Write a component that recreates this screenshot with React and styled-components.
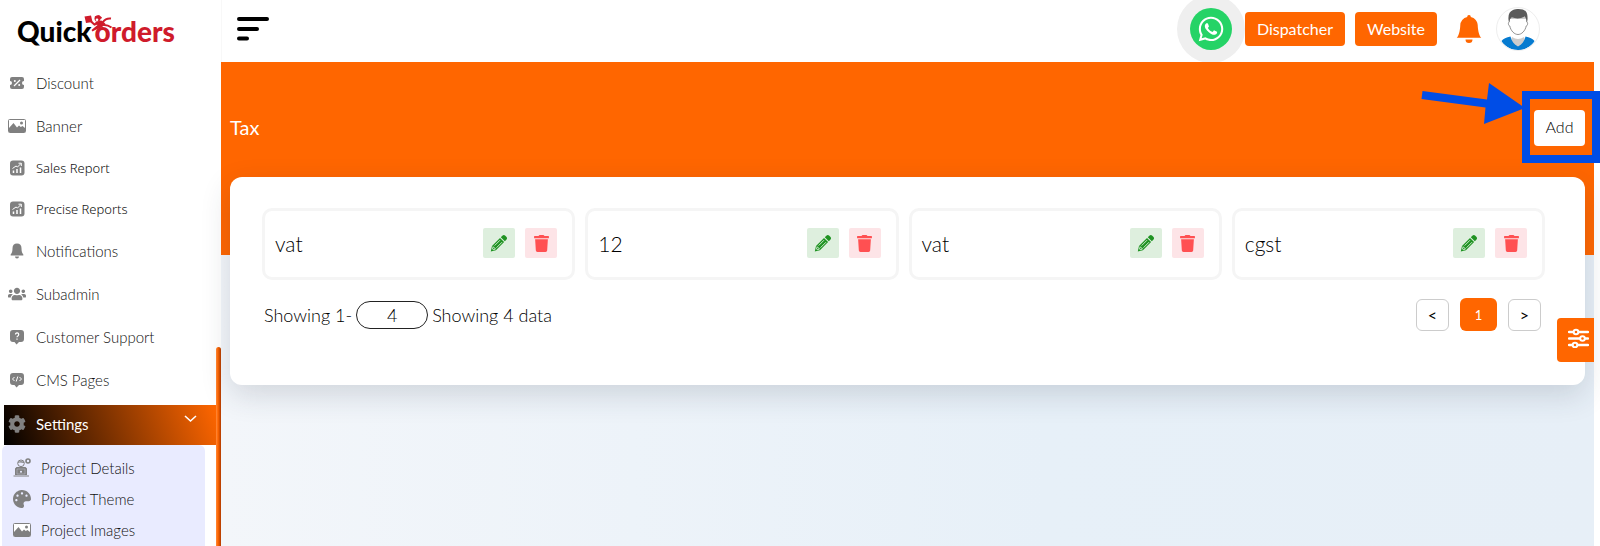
import React, { useState } from 'react'
import styled, { createGlobalStyle } from 'styled-components'
import { BsBellFill } from 'react-icons/bs'
import { FaWhatsapp, FaTrash, FaUsers, FaCog, FaPalette } from 'react-icons/fa'

const GlobalStyle = createGlobalStyle`
  * {
    box-sizing: border-box;
  }
  body {
    margin: 0;
    background: #fff;
    color: #000;
    font-family: Lato, 'Liberation Sans', sans-serif;
    font-weight: 300;
    font-size: 15px;
  }
  button,
  input {
    font: inherit;
    color: inherit;
    margin: 0;
    padding: 0;
    border: 0;
    cursor: pointer;
  }
  a {
    color: inherit;
    text-decoration: none;
  }
  svg {
    display: block;
  }
`

const Layout = styled.div`
  display: flex;
  height: 100vh;
  padding-right: 6px;
  overflow: hidden;
`

/* sidebar */
const Sidebar = styled.aside`
  display: flex;
  flex: 0 0 221px;
`
const SidebarBody = styled.div`
  flex: 1;
  overflow: hidden;
`
const Scroll = styled.div`
  display: flex;
  align-items: flex-end;
  width: 5px;
`
const Thumb = styled.div`
  width: 5px;
  height: 199px;
  border-radius: 3px 3px 0 0;
  background: linear-gradient(90deg, #ff8a3c, #ff6600 40%, #b03a00);
`
const Logo = styled.a`
  position: relative;
  display: flex;
  align-items: center;
  gap: 3px;
  height: 61px;
  padding-left: 17px;
  font-size: 28px;
  line-height: 32px;
  font-weight: 900;
  color: #000;
`
const LogoRed = styled.span`
  color: #cf1b2b;
`
const Runner = styled.svg`
  position: absolute;
  left: 84px;
  top: 15px;
`
const NavLink = styled.a`
  display: flex;
  align-items: center;
  gap: 10px;
  height: ${({ $compact }) => ($compact ? 41 : 43)}px;
  padding-left: 8px;
  color: #111;
  font-family: ${({ $compact }) =>
    $compact ? "'Noto Sans', sans-serif" : 'inherit'};
  font-size: ${({ $compact }) => ($compact ? 13 : 15)}px;
`
const IconBox = styled.span`
  display: flex;
  align-items: center;
  justify-content: center;
  width: 18px;
  color: #808080;
`
const SettingsButton = styled.button`
  display: flex;
  align-items: center;
  gap: 10px;
  width: calc(100% - 4px);
  height: 40px;
  margin: 4px 0 0 4px;
  padding: 0 19px 2px 4px;
  background: linear-gradient(70deg, #000 0%, #ff6600 100%);
  color: #fff;
  font-weight: 400;
`
const Chevron = styled.svg`
  margin: 0 0 10px auto;
`
const SubMenu = styled.div`
  margin: 0 11px 0 2px;
  padding: 7px 0 10px;
  border-radius: 6px;
  background: #e9ebff;
`
const SubLink = styled(NavLink)`
  height: 31px;
  padding-left: 11px;
`

/* top bar */
const Main = styled.main`
  display: flex;
  flex-direction: column;
  flex: 1;
  min-width: 0;
`
const Header = styled.header`
  display: flex;
  align-items: center;
  height: 62px;
  padding: 0 54px 4px 16px;
  box-shadow: inset 1px 0 #f8f8f8;
`
const MenuButton = styled.button`
  background: none;
`
const HeaderActions = styled.div`
  display: flex;
  align-items: center;
  gap: 10px;
  margin-left: auto;
`
const WhatsappLink = styled.a`
  display: flex;
  align-items: center;
  justify-content: center;
  width: 42px;
  height: 42px;
  margin-right: 3px;
  border-radius: 50%;
  background: #25d366;
  box-shadow: 0 0 0 13px #efefef;
  color: #fff;
`
const HeaderButton = styled.button`
  position: relative;
  height: 34px;
  padding: 0 12px 2px;
  border-radius: 4px;
  background: #ff6600;
  color: #fff;
  font-size: 16px;
  font-weight: 400;
`
const BellButton = styled.button`
  margin: 0 3px 0 8px;
  background: none;
  color: #ff6600;
`
const AvatarButton = styled.button`
  width: 44px;
  height: 44px;
  border: 1px solid #eee;
  border-radius: 50%;
  background: #fff;
  overflow: hidden;
`

/* page */
const Content = styled.section`
  position: relative;
  flex: 1;
  padding: 0 9px;
  background:
    linear-gradient(#ff6600, #ff6600) 0 0 / 100% 193px no-repeat,
    linear-gradient(90deg, #f3f6fa, #e7f0f8 60%, #e7eff7);
`
const TitleBar = styled.div`
  display: flex;
  align-items: center;
  justify-content: space-between;
  padding: 48px 0 31px;
`
const Title = styled.h1`
  margin: 0;
  padding-bottom: 2px;
  color: #fff;
  font-size: 20px;
  font-weight: 400;
`
const AddWrap = styled.div`
  position: relative;
`
const AddButton = styled.button`
  display: block;
  width: 51px;
  height: 36px;
  padding-bottom: 4px;
  border-radius: 4px;
  background: #fff;
  font-size: 16px;
`
const Frame = styled.div`
  position: absolute;
  z-index: 1;
  inset: -19px -15px -17px -12px;
  border: 8px solid #004de6;
  pointer-events: none;
`
const Arrow = styled.svg`
  position: absolute;
  z-index: 1;
  right: 60px;
  top: -27px;
`
const Card = styled.div`
  padding: 31px 40px 54px 32px;
  border-radius: 12px;
  background: #fff;
  box-shadow: 0 10px 30px rgba(40, 50, 70, 0.16);
`
const Grid = styled.div`
  display: grid;
  grid-template-columns: repeat(4, 1fr);
  gap: 10px;
`
const Item = styled.div`
  display: flex;
  align-items: center;
  gap: 10px;
  height: 72px;
  padding: 0 15px 2px 10px;
  border: 3px solid #f5f5f5;
  border-radius: 10px;
`
const ItemName = styled.span`
  flex: 1;
  font-size: 21px;
`
const ItemButton = styled.button`
  display: flex;
  align-items: center;
  justify-content: center;
  width: 32px;
  height: 30px;
  border-radius: 2px;
  background: ${({ $danger }) => ($danger ? '#fde4e7' : '#deefde')};
  color: ${({ $danger }) => ($danger ? '#ff5052' : '#1f9322')};
`
const Footer = styled.div`
  display: flex;
  align-items: center;
  justify-content: space-between;
  margin-top: 18px;
  padding: 0 4px 0 2px;
`
const Showing = styled.label`
  display: flex;
  align-items: center;
  gap: 4px;
  font-size: 18px;
`
const CountInput = styled.input`
  width: 72px;
  height: 28px;
  border: 1px solid #222;
  border-radius: 14px;
  background: #fff;
  text-align: center;
`
const Pages = styled.nav`
  display: flex;
  align-items: center;
  gap: 11px;
`
const PageButton = styled.button`
  width: ${({ $active }) => ($active ? 37 : 33)}px;
  height: ${({ $active }) => ($active ? 33 : 32)}px;
  border: ${({ $active }) => ($active ? 'none' : '1px solid #ccc')};
  border-radius: 6px;
  background: ${({ $active }) => ($active ? '#ff6600' : '#fff')};
  color: ${({ $active }) => ($active ? '#fff' : '#000')};
  font-size: ${({ $active }) => ($active ? 13 : 16)}px;
  font-weight: 400;
`
const FilterButton = styled.button`
  position: absolute;
  right: 0;
  top: 256px;
  display: flex;
  align-items: center;
  justify-content: center;
  width: 37px;
  height: 44px;
  padding: 0 5px 4px 11px;
  border-radius: 4px 0 0 4px;
  background: #ff6600;
`

const TicketIcon = () => (
  <svg width="16" height="14" viewBox="0 0 16 14">
    <path
      fill="currentColor"
      d="M3 1h10a2 2 0 0 1 2 2v2a2 2 0 0 0 0 4v2a2 2 0 0 1-2 2H3a2 2 0 0 1-2-2V9a2 2 0 0 0 0-4V3a2 2 0 0 1 2-2z"
    />
    <path d="M5 10l6-6" stroke="#fff" strokeWidth="1.2" />
    <circle cx="5.8" cy="4.9" r="1" fill="#fff" />
    <circle cx="10.2" cy="9.1" r="1" fill="#fff" />
  </svg>
)
const ImageIcon = () => (
  <svg width="18" height="14" viewBox="0 0 18 14">
    <rect x="0.5" y="0.5" width="17" height="13" rx="1" fill="#fff" stroke="currentColor" />
    <path fill="currentColor" d="M1 9l4.500-5 3.500 4.500 2-2 1.800 1.500 1.700-1L17 9v4H1z" />
    <circle cx="13.500" cy="4" r="1.500" fill="currentColor" />
  </svg>
)
const ChartIcon = () => (
  <svg width="16" height="16" viewBox="0 0 16 16">
    <rect x="1" y="0.500" width="14.500" height="15" rx="3" fill="currentColor" />
    <path
      d="M4.500 13v-2.500M8 13V9M11.500 13V7.500"
      stroke="#fff"
      strokeWidth="1.500"
      fill="none"
    />
    <path d="M3.500 8.500L7 6l1.500 1L12 3.500M9.500 3.200h2.800V6" stroke="#fff" fill="none" />
  </svg>
)
const ChatIcon = ({ children }) => (
  <svg width="16" height="16" viewBox="0 0 16 16">
    <path
      fill="currentColor"
      d="M4 1h8a3 3 0 0 1 3 3v6a3 3 0 0 1-3 3h-2l-2.500 2.500L5.500 13H4a3 3 0 0 1-3-3V4a3 3 0 0 1 3-3z"
    />
    {children}
  </svg>
)
const HelpIcon = () => (
  <ChatIcon>
    <path
      d="M6.500 5.500a1.600 1.600 0 1 1 2.400 1.400c-.7.400-.9.700-.9 1.300M8 9.500v1.200"
      stroke="#fff"
      strokeWidth="1.200"
      fill="none"
    />
  </ChatIcon>
)
const CodeIcon = () => (
  <ChatIcon>
    <path
      d="M5.500 5L3.500 7l2 2M10.500 5l2 2-2 2M8.800 4.500L7.200 9.500"
      stroke="#fff"
      fill="none"
    />
  </ChatIcon>
)
const BellIcon = () => (
  <svg width="14" height="16" viewBox="0 0 14 16">
    <path
      fill="currentColor"
      d="M7 .5c3 0 4.500 2 4.500 4.700 0 3.300.5 4.500 1.800 6.300.3.500 0 1-.6 1H1.300c-.6 0-.9-.5-.6-1C2 9.700 2.500 8.500 2.500 5.200 2.500 2.500 4 .5 7 .5zM5 13.500h4a2 2 0 0 1-4 0z"
    />
  </svg>
)
const OperatorIcon = () => (
  <svg width="18" height="19" viewBox="0 0 18 19">
    <path
      fill="currentColor"
      d="M3.500 9h9l1.500 1.500V17H2v-6.500zM.5 17.500h15.500v1H.5z"
    />
    <circle cx="8" cy="5.300" r="3.300" fill="none" stroke="currentColor" />
    <path d="M4.700 5C5 2.500 11 2.500 11.300 5c-2-.3-4-.8-6.600 0z" fill="currentColor" />
    <circle cx="15" cy="3" r="2" fill="none" stroke="currentColor" strokeWidth="1.600" />
    <path d="M4 11h8v5H4z" fill="none" stroke="#b5b6c4" strokeWidth="0.600" />
    <circle cx="8" cy="13.800" r="1" fill="#e9ebff" />
  </svg>
)
const PencilIcon = () => (
  <svg width="18" height="18" viewBox="0 0 18 18">
    <path
      fill="currentColor"
      d="M12.300 1.700c1-1 2-1 3 0l1 1c1 1 1 2 0 3l-1.500 1.500-4-4zM10 3.900l4.100 4.100-8.200 8.200L.8 17.500l1.200-5.400z"
    />
    <path
      d="M10 6.200l-5.400 5.400M12 8.200l-5.500 5.500M3.200 12.700l2.300 2.300-2.300.7-.7-.7z"
      stroke="#deefde"
      strokeWidth="0.900"
      fill="none"
    />
  </svg>
)
const SlidersIcon = () => (
  <svg width="21" height="20" viewBox="0 0 21 20">
    <g fill="#ff6600" stroke="#fff" strokeWidth="2" strokeLinecap="round">
      <path d="M1 4h19M1 10.500h19M1 17h19" strokeWidth="2.400" />
      <circle cx="8" cy="4" r="2.300" />
      <circle cx="14.500" cy="10.500" r="2.300" />
      <circle cx="7" cy="17" r="2.300" />
    </g>
  </svg>
)
const AvatarIcon = () => (
  <svg width="42" height="42" viewBox="0 0 42 42">
    <path d="M15 29q6 4 12 0l2 7-8 5-8-5z" fill="#ccc" />
    <path
      d="M13.500 28.500c-4 1-7.500 2-9 4.500 2 4 8 9 16.500 9s14.500-5 16.500-9c-1.500-2.500-5-3.500-9-4.500-1 4.500-3.500 8-7.500 10-4-2-6.500-5.500-7.500-10z"
      fill="#067bd0"
    />
    <path
      d="M12.300 10v4c-1.300 0-1.300 3.500.5 4 1 5 4.700 8.500 8.200 8.500s7.200-3.500 8.200-8.500c1.800-.5 1.800-4 .5-4v-4z"
      fill="#fff"
      stroke="#777"
      strokeWidth="0.800"
    />
    <path
      d="M12 14c-1.500-6 0-10.500 4-12C20 .3 27 .5 29.300 4c1.500 3 1.500 6 .7 10-.5-2-1-4-2.200-5.500-4.800 2.500-9 2.300-13 .8-1.500 1-2.300 3-2.800 4.700z"
      fill="#5b5b5b"
    />
  </svg>
)

const navItems = [
  { label: 'Discount', icon: <TicketIcon /> },
  { label: 'Banner', icon: <ImageIcon /> },
  { label: 'Sales Report', icon: <ChartIcon />, compact: true },
  { label: 'Precise Reports', icon: <ChartIcon />, compact: true },
  { label: 'Notifications', icon: <BellIcon /> },
  { label: 'Subadmin', icon: <FaUsers size={18} /> },
  { label: 'Customer Support', icon: <HelpIcon /> },
  { label: 'CMS Pages', icon: <CodeIcon /> },
]
const subItems = [
  { label: 'Project Details', icon: <OperatorIcon /> },
  { label: 'Project Theme', icon: <FaPalette size={18} /> },
  { label: 'Project Images', icon: <ImageIcon /> },
]
const taxes = ['vat', '12', 'vat', 'cgst']

const App = () => {
  const [open, setOpen] = useState(true)
  const [count, setCount] = useState('4')

  return (
    <Layout>
      <GlobalStyle />
      <Sidebar>
        <SidebarBody>
          <Logo href="#">
            <span>Quick</span>
            <LogoRed>orders</LogoRed>
            <Runner width="30" height="17" viewBox="0 0 30 17">
              <g fill="#cf1b2b">
                <path d="M.5 1.500L7 .5l1.500 6.500-6.500 1z" />
                <circle cx="13.500" cy="3.500" r="3" />
                <path d="M10.500 1.500l4.500-1.500 3 2.500-1 1.500z" />
                <path d="M11 7l6-1.500c2 .5 3.500 2 4.500 3.500l-4 3.500c-3 1-6 2-9 4l-1-1.500 6-5z" />
              </g>
              <path
                d="M7 6.500l3.500 3 4-1.500M19 7c2-3 4-4 8-3.500M19 10c3-.5 5 0 8.500 2.500"
                stroke="#cf1b2b"
                strokeWidth="2"
                fill="none"
              />
              <circle cx="13" cy="4.800" r="1.300" fill="#fff" />
            </Runner>
          </Logo>
          {navItems.map(({ label, icon, compact }) => (
            <NavLink key={label} href="#" $compact={compact}>
              <IconBox>{icon}</IconBox>
              {label}
            </NavLink>
          ))}
          <SettingsButton aria-expanded={open} onClick={() => setOpen(!open)}>
            <IconBox>
              <FaCog size={18} />
            </IconBox>
            Settings
            <Chevron width="13" height="8" viewBox="0 0 13 8">
              <path d="M1 1l5.500 5L12 1" stroke="#fff" strokeWidth="1.600" fill="none" />
            </Chevron>
          </SettingsButton>
          {open && (
            <SubMenu>
              {subItems.map(({ label, icon }) => (
                <SubLink key={label} href="#">
                  <IconBox>{icon}</IconBox>
                  {label}
                </SubLink>
              ))}
            </SubMenu>
          )}
        </SidebarBody>
        <Scroll>
          <Thumb />
        </Scroll>
      </Sidebar>
      <Main>
        <Header>
          <MenuButton aria-label="Toggle menu">
            <svg width="32" height="24" viewBox="0 0 32 24">
              <path
                d="M2 2h28M2 12h18M2 21.500h8"
                stroke="#000"
                strokeWidth="4"
                strokeLinecap="round"
              />
            </svg>
          </MenuButton>
          <HeaderActions>
            <WhatsappLink href="#" aria-label="WhatsApp">
              <FaWhatsapp size={28} />
            </WhatsappLink>
            <HeaderButton>Dispatcher</HeaderButton>
            <HeaderButton>Website</HeaderButton>
            <BellButton aria-label="Alerts">
              <BsBellFill size={28} />
            </BellButton>
            <AvatarButton aria-label="Profile">
              <AvatarIcon />
            </AvatarButton>
          </HeaderActions>
        </Header>
        <Content>
          <TitleBar>
            <Title>Tax</Title>
            <AddWrap>
              <AddButton>Add</AddButton>
              <Frame />
              <Arrow width="104" height="44" viewBox="0 0 104 44">
                <path
                  d="M1.500 8L66 16.500 68 0l36 25-41 16 1.500-16.500L.5 16z"
                  fill="#004de6"
                />
              </Arrow>
            </AddWrap>
          </TitleBar>
          <Card>
            <Grid>
              {taxes.map((name, i) => (
                <Item key={i}>
                  <ItemName>{name}</ItemName>
                  <ItemButton aria-label={`Edit ${name}`}>
                    <PencilIcon />
                  </ItemButton>
                  <ItemButton $danger aria-label={`Delete ${name}`}>
                    <FaTrash size={17} />
                  </ItemButton>
                </Item>
              ))}
            </Grid>
            <Footer>
              <Showing>
                Showing 1-
                <CountInput
                  value={count}
                  onChange={(e) => setCount(e.target.value)}
                />
                Showing 4 data
              </Showing>
              <Pages>
                <PageButton aria-label="Previous">&lt;</PageButton>
                <PageButton $active>1</PageButton>
                <PageButton aria-label="Next">&gt;</PageButton>
              </Pages>
            </Footer>
          </Card>
          <FilterButton aria-label="Filters">
            <SlidersIcon />
          </FilterButton>
        </Content>
      </Main>
    </Layout>
  )
}

export default App
